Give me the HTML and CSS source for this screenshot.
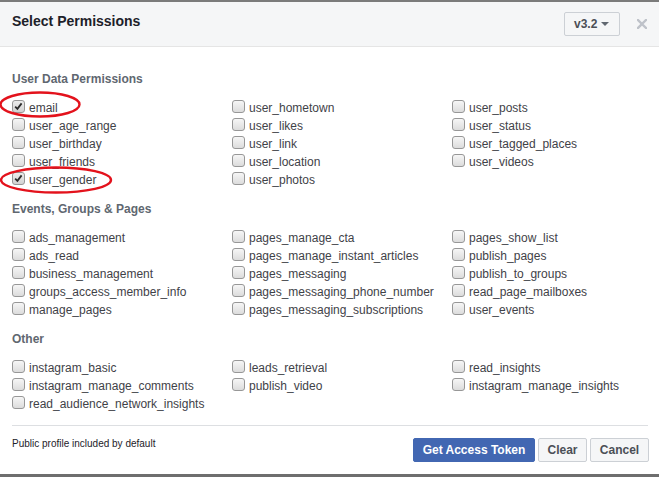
FILE: index.html
```html
<!DOCTYPE html>
<html>
<head>
<meta charset="utf-8">
<link rel="stylesheet" href="styles.css">
</head>
<body>
<div class="modal">
  <div class="header">
    <div class="title">Select Permissions</div>
    <div class="version">v3.2<span class="caret"></span></div>
    <div class="close"><svg width="10" height="10" viewBox="0 0 10 10"><path d="M1 1L9 9M9 1L1 9" stroke="#bec2c9" stroke-width="2.4" stroke-linecap="square"/></svg></div>
  </div>
  <div class="body">
    <div class="section">
      <div class="heading">User Data Permissions</div>
      <div class="cols">
        <div class="col">
          <div class="item"><span class="cb checked"><svg width="11" height="11" viewBox="0 0 11 11"><path d="M2.2 5.6L4.4 7.8L8.6 2.4" fill="none" stroke="#2b2b2b" stroke-width="1.8"/></svg></span>email</div>
          <div class="item"><span class="cb"></span>user_age_range</div>
          <div class="item"><span class="cb"></span>user_birthday</div>
          <div class="item"><span class="cb"></span>user_friends</div>
          <div class="item"><span class="cb checked"><svg width="11" height="11" viewBox="0 0 11 11"><path d="M2.2 5.6L4.4 7.8L8.6 2.4" fill="none" stroke="#2b2b2b" stroke-width="1.8"/></svg></span>user_gender</div>
        </div>
        <div class="col">
          <div class="item"><span class="cb"></span>user_hometown</div>
          <div class="item"><span class="cb"></span>user_likes</div>
          <div class="item"><span class="cb"></span>user_link</div>
          <div class="item"><span class="cb"></span>user_location</div>
          <div class="item"><span class="cb"></span>user_photos</div>
        </div>
        <div class="col">
          <div class="item"><span class="cb"></span>user_posts</div>
          <div class="item"><span class="cb"></span>user_status</div>
          <div class="item"><span class="cb"></span>user_tagged_places</div>
          <div class="item"><span class="cb"></span>user_videos</div>
        </div>
      </div>
    </div>
    <div class="section">
      <div class="heading">Events, Groups &amp; Pages</div>
      <div class="cols">
        <div class="col">
          <div class="item"><span class="cb"></span>ads_management</div>
          <div class="item"><span class="cb"></span>ads_read</div>
          <div class="item"><span class="cb"></span>business_management</div>
          <div class="item"><span class="cb"></span>groups_access_member_info</div>
          <div class="item"><span class="cb"></span>manage_pages</div>
        </div>
        <div class="col">
          <div class="item"><span class="cb"></span>pages_manage_cta</div>
          <div class="item"><span class="cb"></span>pages_manage_instant_articles</div>
          <div class="item"><span class="cb"></span>pages_messaging</div>
          <div class="item"><span class="cb"></span>pages_messaging_phone_number</div>
          <div class="item"><span class="cb"></span>pages_messaging_subscriptions</div>
        </div>
        <div class="col">
          <div class="item"><span class="cb"></span>pages_show_list</div>
          <div class="item"><span class="cb"></span>publish_pages</div>
          <div class="item"><span class="cb"></span>publish_to_groups</div>
          <div class="item"><span class="cb"></span>read_page_mailboxes</div>
          <div class="item"><span class="cb"></span>user_events</div>
        </div>
      </div>
    </div>
    <div class="section">
      <div class="heading">Other</div>
      <div class="cols">
        <div class="col">
          <div class="item"><span class="cb"></span>instagram_basic</div>
          <div class="item"><span class="cb"></span>instagram_manage_comments</div>
          <div class="item"><span class="cb"></span>read_audience_network_insights</div>
        </div>
        <div class="col">
          <div class="item"><span class="cb"></span>leads_retrieval</div>
          <div class="item"><span class="cb"></span>publish_video</div>
        </div>
        <div class="col">
          <div class="item"><span class="cb"></span>read_insights</div>
          <div class="item"><span class="cb"></span>instagram_manage_insights</div>
        </div>
      </div>
    </div>
  </div>
  <div class="divider"></div>
  <div class="footer">
    <div class="note">Public profile included by default</div>
    <div class="buttons">
      <button class="btn primary">Get Access Token</button>
      <button class="btn clear">Clear</button>
      <button class="btn cancel">Cancel</button>
    </div>
  </div>
  <div class="bottom-bar"></div>
  <svg class="marks" width="659" height="477" viewBox="0 0 659 477">
    <ellipse cx="40" cy="104.5" rx="39.5" ry="12" fill="none" stroke="#e3121c" stroke-width="2.4"/>
    <ellipse cx="56" cy="180" rx="55" ry="12.5" fill="none" stroke="#e3121c" stroke-width="2.4"/>
  </svg>
</div>
</body>
</html>
```

FILE: styles.css
```css
html, body {
  margin: 0;
  padding: 0;
  background: #ffffff;
}
body {
  font-family: "Liberation Sans", Arial, Helvetica, sans-serif;
  width: 659px;
  height: 477px;
  overflow: hidden;
}
.modal {
  position: relative;
  width: 659px;
  height: 477px;
  border-top: 2px solid #7b7b7b;
  box-sizing: border-box;
  display: flex;
  flex-direction: column;
}
.header {
  height: 45px;
  box-sizing: border-box;
  background: #f5f6f7;
  border-bottom: 1px solid #e5e5e5;
  display: flex;
  align-items: flex-start;
  padding: 10px 12px 0 12px;
}
.title {
  flex: 1;
  font-size: 14px;
  font-weight: bold;
  line-height: 18px;
  color: #1d2129;
}
.version {
  height: 24px;
  box-sizing: border-box;
  border: 1px solid #ccd0d5;
  border-radius: 2px;
  background: #f5f6f7;
  padding: 0 9px 0 9px;
  display: flex;
  align-items: center;
  font-size: 12px;
  font-weight: bold;
  color: #4b4f56;
  width: 56px;
}
.caret {
  margin-left: 4px;
  width: 0;
  height: 0;
  border-left: 4px solid transparent;
  border-right: 4px solid transparent;
  border-top: 4px solid #606770;
}
.close {
  margin-left: 17px;
  margin-top: 7px;
  width: 10px;
  height: 10px;
  display: flex;
}
.body {
  padding: 23px 11px 12px 12px;
  flex: 0 0 auto;
}
.section + .section {
  margin-top: 11px;
}
.heading {
  font-size: 12px;
  font-weight: bold;
  line-height: 18px;
  color: #606770;
  margin-bottom: 11px;
}
.cols {
  display: grid;
  grid-template-columns: 220px 220px 1fr;
}
.item {
  display: flex;
  align-items: flex-start;
  height: 18px;
  line-height: 18px;
  font-size: 12px;
  color: #3f4248;
  white-space: nowrap;
}
.cb {
  width: 13px;
  height: 13px;
  box-sizing: border-box;
  margin-top: 1px;
  margin-right: 4px;
  border: 1px solid #979797;
  border-radius: 3px;
  background: linear-gradient(#f6f6f6, #dcdcdc);
  display: flex;
  align-items: center;
  justify-content: center;
  flex: 0 0 auto;
}
.cb.checked {
  background: linear-gradient(#ececec, #d2d2d2);
}
.divider {
  height: 1px;
  background: #dddfe2;
  margin: 0 11px 0 12px;
}
.footer {
  display: flex;
  justify-content: space-between;
  align-items: flex-start;
  padding: 12px 10px 12px 12px;
}
.note {
  font-size: 10px;
  line-height: 12px;
  color: #1d2129;
}
.buttons {
  display: flex;
  gap: 3px;
}
.btn {
  height: 24px;
  box-sizing: border-box;
  padding: 0;
  border: 1px solid #ccd0d5;
  border-radius: 2px;
  background: #f5f6f7;
  color: #4b4f56;
  font-family: "Liberation Sans", Arial, Helvetica, sans-serif;
  font-size: 12px;
  font-weight: bold;
  line-height: 22px;
  text-align: center;
}
.btn.primary {
  width: 122px;
  background: #4267b2;
  border-color: #4267b2;
  color: #ffffff;
}
.btn.clear {
  width: 49px;
}
.btn.cancel {
  width: 59px;
}
.bottom-bar {
  margin-top: auto;
  height: 3px;
  background: #6e6e6e;
}
.marks {
  position: absolute;
  top: -2px;
  left: 0;
  pointer-events: none;
}
```
